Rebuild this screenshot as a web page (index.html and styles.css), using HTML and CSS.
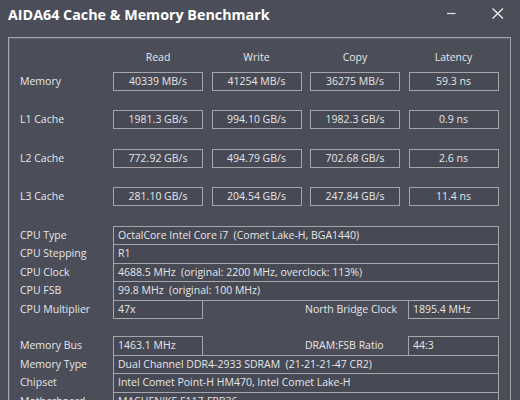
FILE: index.html
```html
<!DOCTYPE html>
<html>
<head>
<meta charset="utf-8">
<link rel="stylesheet" href="styles.css">
</head>
<body>
<div class="window">
  <div class="titlebar">
    <div class="title">AIDA64 Cache &amp; Memory Benchmark</div>
    <svg class="controls" width="60" height="37" viewBox="0 0 60 37">
      <line x1="1" y1="13.5" x2="9.5" y2="13.5" stroke="#e8e8ea" stroke-width="1.2"/>
      <line x1="46.5" y1="8.5" x2="57" y2="18.5" stroke="#f0f0f2" stroke-width="1.3"/>
      <line x1="57" y1="8.5" x2="46.5" y2="18.5" stroke="#f0f0f2" stroke-width="1.3"/>
    </svg>
  </div>
  <div class="group">
    <div class="bhdr">
      <div class="hcell">Read</div>
      <div class="hcell">Write</div>
      <div class="hcell">Copy</div>
      <div class="hcell">Latency</div>
    </div>

    <div class="brow">
      <div class="blbl">Memory</div>
      <div class="val">40339 MB/s</div>
      <div class="val">41254 MB/s</div>
      <div class="val">36275 MB/s</div>
      <div class="val">59.3 ns</div>
    </div>
    <div class="brow">
      <div class="blbl">L1 Cache</div>
      <div class="val">1981.3 GB/s</div>
      <div class="val">994.10 GB/s</div>
      <div class="val">1982.3 GB/s</div>
      <div class="val">0.9 ns</div>
    </div>
    <div class="brow">
      <div class="blbl">L2 Cache</div>
      <div class="val">772.92 GB/s</div>
      <div class="val">494.79 GB/s</div>
      <div class="val">702.68 GB/s</div>
      <div class="val">2.6 ns</div>
    </div>
    <div class="brow">
      <div class="blbl">L3 Cache</div>
      <div class="val">281.10 GB/s</div>
      <div class="val">204.54 GB/s</div>
      <div class="val">247.84 GB/s</div>
      <div class="val">11.4 ns</div>
    </div>

    <div class="info first">
      <div class="lbl">CPU Type</div>
      <div class="box wide">OctalCore Intel Core i7  (Comet Lake-H, BGA1440)</div>
    </div>
    <div class="info">
      <div class="lbl">CPU Stepping</div>
      <div class="box wide">R1</div>
    </div>
    <div class="info">
      <div class="lbl">CPU Clock</div>
      <div class="box wide">4688.5 MHz  (original: 2200 MHz, overclock: 113%)</div>
    </div>
    <div class="info">
      <div class="lbl">CPU FSB</div>
      <div class="box wide">99.8 MHz  (original: 100 MHz)</div>
    </div>
    <div class="info">
      <div class="lbl">CPU Multiplier</div>
      <div class="box">47x</div>
      <div></div>
      <div class="lbl">North Bridge Clock</div>
      <div class="box">1895.4 MHz</div>
    </div>

    <div class="info second">
      <div class="lbl">Memory Bus</div>
      <div class="box">1463.1 MHz</div>
      <div></div>
      <div class="lbl">DRAM:FSB Ratio</div>
      <div class="box">44:3</div>
    </div>
    <div class="info">
      <div class="lbl">Memory Type</div>
      <div class="box wide">Dual Channel DDR4-2933 SDRAM  (21-21-21-47 CR2)</div>
    </div>
    <div class="info">
      <div class="lbl">Chipset</div>
      <div class="box wide">Intel Comet Point-H HM470, Intel Comet Lake-H</div>
    </div>
    <div class="info">
      <div class="lbl">Motherboard</div>
      <div class="box wide">MACHENIKE F117-FPB36</div>
    </div>
  </div>
</div>
</body>
</html>
```
FILE: styles.css
```css
html, body {
  margin: 0;
  padding: 0;
}
body {
  width: 520px;
  height: 400px;
  overflow: hidden;
  background: #4b4e58;
  font-family: "Open Sans", "Noto Sans", sans-serif;
  font-size: 10.5px;
  color: #e6e6e8;
}
.window {
  width: 520px;
  height: 400px;
  overflow: hidden;
}
.titlebar {
  height: 37px;
  display: flex;
  align-items: flex-start;
  padding-left: 8px;
  padding-right: 14px;
}
.title {
  margin-top: 4.5px;
  font-size: 14.3px;
  font-weight: 700;
  line-height: 20px;
  color: #ffffff;
  white-space: nowrap;
}
.controls {
  margin-left: auto;
  display: block;
}
.group {
  margin-left: 8px;
  width: 503px;
  height: 380px;
  border: 1px solid #a4a6ac;
  border-bottom: none;
  box-shadow: inset 1px 1px 0 #5e616b;
  padding: 11px 0 0 11px;
  box-sizing: border-box;
}
.bhdr {
  display: flex;
  gap: 8.5px;
  padding-left: 93px;
  height: 16px;
  line-height: 16px;
}
.hcell {
  width: 90px;
  text-align: center;
}
.brow {
  display: flex;
  gap: 8.5px;
  height: 19px;
  margin-top: 19.5px;
}
.bhdr + .brow {
  margin-top: 6.7px;
}
.blbl {
  width: 93px;
  margin-right: -8.5px;
  line-height: 19px;
  white-space: nowrap;
}
.val {
  box-sizing: border-box;
  width: 90px;
  height: 19px;
  border: 1px solid #a4a6ac;
  background: #474a54;
  text-align: center;
  line-height: 17px;
  white-space: nowrap;
}
.info {
  display: grid;
  grid-template-columns: 93px 90px 102px 103px 91px;
  height: 19.5px;
  margin-top: -1px;
}
.info.first {
  margin-top: 19.8px;
}
.info.second {
  margin-top: 17px;
}
.lbl {
  line-height: 19.5px;
  white-space: nowrap;
}
.box {
  box-sizing: border-box;
  height: 19.5px;
  border: 1px solid #a4a6ac;
  background: #474a54;
  padding-left: 4px;
  line-height: 17.5px;
  white-space: pre;
  overflow: hidden;
}
.box.wide {
  grid-column: 2 / 6;
}
```
